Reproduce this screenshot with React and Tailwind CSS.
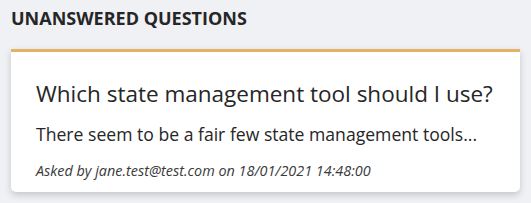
import React from 'react';

const question = {
    title: 'Which state management tool should I use?',
    content: 'There seem to be a fair few state management tools...',
    userName: 'jane.test@test.com',
    created: '18/01/2021 14:48:00',
};

const App = () => {
    return (
        <div className="min-h-[203px] bg-[#f0f1f5] px-[11px] pt-[6px] text-[#262626]" style={{ fontFamily: '"Open Sans", "Noto Sans", sans-serif' }}>
            <h2 className="text-[18px] font-bold leading-[24px] text-[#262626]">UNANSWERED QUESTIONS</h2>
            <div className="mt-[19px] bg-white border-t-[3px] border-[#e3b264] rounded-b-[5px] shadow-[0_3px_7px_rgba(0,0,0,0.18)] px-[25px] pt-[27px] pb-[11px]">
                <div className="text-[22.5px] leading-[30px]">{question.title}</div>
                <div className="mt-[13px] text-[17.6px] leading-[24px]">{question.content}</div>
                <div className="mt-[15px] text-[14.4px] italic leading-[20px] text-[#3a3a3a]">
                    Asked by {question.userName} on {question.created}
                </div>
            </div>
        </div>
    );
};

export default App;
